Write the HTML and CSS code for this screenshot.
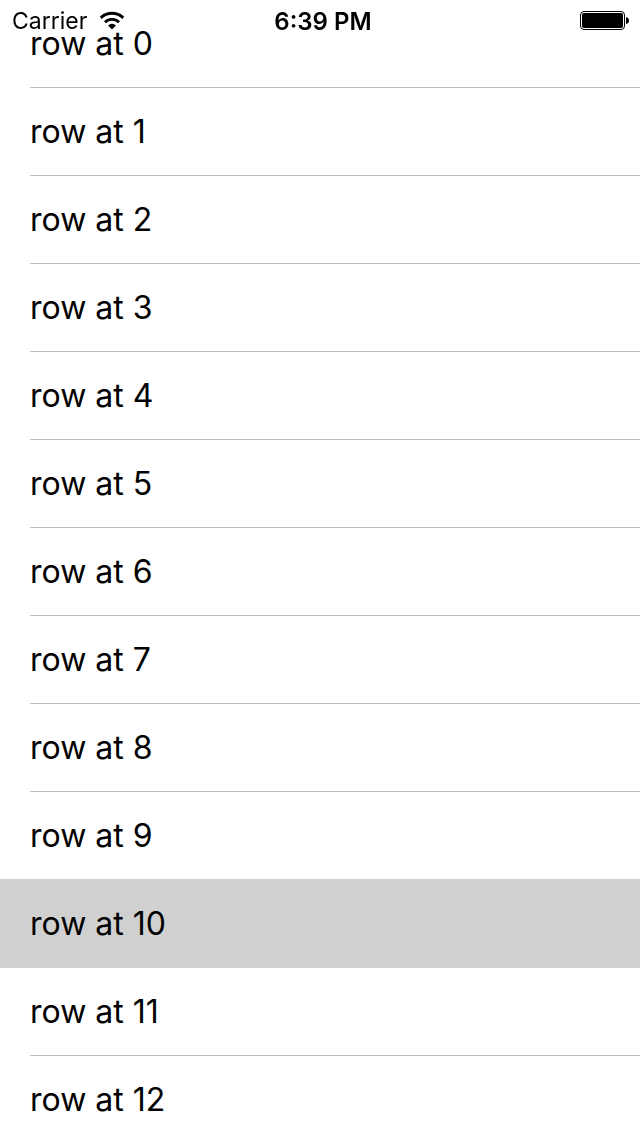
FILE: index.html
```html
<!DOCTYPE html>
<html lang="en">
<head>
<meta charset="utf-8">
<meta name="viewport" content="width=device-width, initial-scale=1">
<title>Rows</title>
<link rel="stylesheet" href="styles.css">
</head>
<body>
<header class="status-bar">
  <div class="carrier">
    <span>Carrier</span>
    <svg class="wifi" viewBox="0 0 26 20" aria-hidden="true">
      <path d="M0.8 5.8A17.4 17.4 0 0 1 25.2 5.8L23.2 8A14.6 14.6 0 0 0 2.8 8Z"/>
      <path d="M5 10.2A11.4 11.4 0 0 1 21 10.2L19 12.3A8.6 8.6 0 0 0 7 12.3Z"/>
      <path d="M9.1 14.4A5.6 5.6 0 0 1 16.9 14.4L13 18.5Z"/>
    </svg>
  </div>
  <time class="clock">6:39 PM</time>
  <svg class="battery" viewBox="0 0 50 20" aria-hidden="true">
    <rect x="0.5" y="0.5" width="44" height="18" rx="3.5" fill="none" stroke="#000"/>
    <rect x="2" y="2" width="41" height="15" rx="2"/>
    <path d="M46 6Q49 6.5 49 9.5T46 13Z"/>
  </svg>
</header>
<main>
  <ul class="rows">
    <li class="row"><span class="label">row at 0</span></li>
    <li class="row"><span class="label">row at 1</span></li>
    <li class="row"><span class="label">row at 2</span></li>
    <li class="row"><span class="label">row at 3</span></li>
    <li class="row"><span class="label">row at 4</span></li>
    <li class="row"><span class="label">row at 5</span></li>
    <li class="row"><span class="label">row at 6</span></li>
    <li class="row"><span class="label">row at 7</span></li>
    <li class="row"><span class="label">row at 8</span></li>
    <li class="row"><span class="label">row at 9</span></li>
    <li class="row selected"><span class="label">row at 10</span></li>
    <li class="row"><span class="label">row at 11</span></li>
    <li class="row"><span class="label">row at 12</span></li>
  </ul>
</main>
</body>
</html>
```
FILE: styles.css
```css
* {
  box-sizing: border-box;
}

body {
  margin: 0;
  background: #fff;
  color: #000;
  font-family: Inter, "Liberation Sans", sans-serif;
}

/* The status bar floats over the scrolling list. */
.status-bar {
  position: fixed;
  top: 0;
  left: 0;
  right: 0;
  z-index: 1;
  display: grid;
  grid-template-columns: 1fr auto 1fr;
  align-items: center;
  height: 42px;
  padding: 0 10px 0 12px;
  font-size: 24px;
}

.carrier {
  display: flex;
  align-items: center;
  gap: 12px;
  font-size: 23px;
}

.wifi {
  width: 26px;
  height: 20px;
}

.clock {
  padding-left: 4px;
  font-weight: 600;
}

.battery {
  justify-self: end;
  width: 50px;
  height: 20px;
}

.rows {
  margin: 0;
  padding: 0;
  list-style: none;
}

.row {
  padding-left: 30px;
}

.label {
  display: block;
  padding: 22px 0 21px;
  border-bottom: 1px solid #bcbbc1;
  font-size: 32px;
  line-height: 44px;
}

/* The highlight covers the separator above it. */
.selected {
  position: relative;
  margin-top: -1px;
  padding-top: 1px;
  background: #d0d0d0;
}

.selected .label {
  border-color: transparent;
}
```
